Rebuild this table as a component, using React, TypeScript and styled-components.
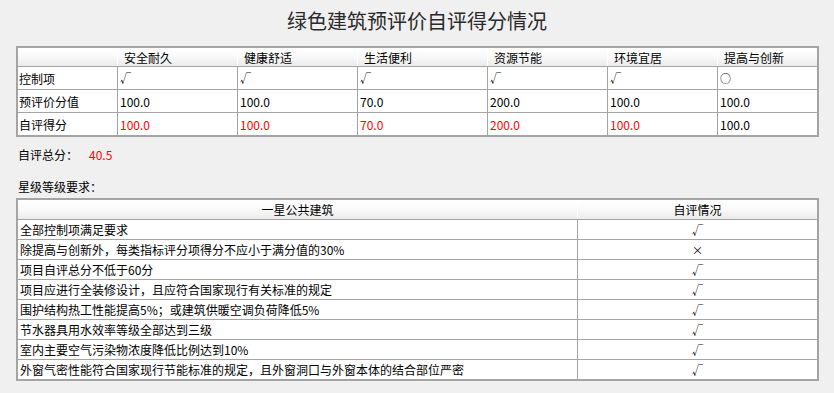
import styled, { createGlobalStyle } from 'styled-components';

const GlobalStyle = createGlobalStyle`
  html, body {
    margin: 0;
    padding: 0;
    background: #f0f0f0;
  }
  body {
    font-family: SimSun, "Noto Sans CJK SC", "Liberation Sans", sans-serif;
    font-size: 12px;
    color: #000;
  }
`;

const Page = styled.div`
  width: 834px;
  height: 393px;
  box-sizing: border-box;
  padding-left: 16px;
  overflow: hidden;
`;

const Title = styled.h1`
  margin: 0 0 6px -16px;
  height: 40px;
  display: flex;
  align-items: center;
  justify-content: center;
  font-size: 20px;
  font-weight: normal;
  color: #2a2a2a;
`;

const Frame = styled.div`
  width: 803px;
  box-sizing: border-box;
  border: 2px solid #a4a4a4;
  background: #a4a4a4;
`;

const Row = styled.div<{ $cols: string; $head?: boolean }>`
  display: grid;
  grid-template-columns: ${(p) => p.$cols};
  column-gap: 1px;
  background: ${(p) => (p.$head ? '#ffffff' : '#a4a4a4')};
  & + & {
    margin-top: 1px;
  }
`;

const HeadCell = styled.div<{ $h: number; $center?: boolean }>`
  height: ${(p) => p.$h}px;
  display: flex;
  align-items: center;
  justify-content: ${(p) => (p.$center ? 'center' : 'flex-start')};
  padding-left: ${(p) => (p.$center ? 0 : 6)}px;
  background: linear-gradient(#ffffff, #f8f8f8 55%, #ebebeb);
  white-space: nowrap;
`;

const Cell = styled.div<{ $h: number; $center?: boolean; $red?: boolean }>`
  height: ${(p) => p.$h}px;
  display: flex;
  align-items: center;
  justify-content: ${(p) => (p.$center ? 'center' : 'flex-start')};
  padding-left: ${(p) => (p.$center ? 0 : 2)}px;
  background: #ffffff;
  color: ${(p) => (p.$red ? '#ff0000' : '#000000')};
  white-space: nowrap;
  overflow: hidden;
`;

const Label = styled(Cell)`
  padding-left: 1px;
`;

const Mark = styled.span`
  font-size: 11px;
`;

const Summary = styled.div`
  margin-top: 10px;
  padding-left: 2px;
  height: 16px;
  line-height: 16px;
  display: flex;
`;

const Score = styled.span`
  margin-left: 11px;
  color: #ff0000;
`;

const Caption = styled.div`
  margin-top: 16px;
  padding-left: 2px;
  height: 16px;
  line-height: 16px;
  margin-bottom: 3px;
`;

const scoreCols = '99px 119px 119px 129px 119px 109px 99px';
const reqCols = '559px 239px';

const categories = ['安全耐久', '健康舒适', '生活便利', '资源节能', '环境宜居', '提高与创新'];
const controls = ['√', '√', '√', '√', '√', '○'];
const preset = ['100.0', '100.0', '70.0', '200.0', '100.0', '100.0'];
const selfScores = ['100.0', '100.0', '70.0', '200.0', '100.0', '100.0'];

const requirements = [
  { text: '全部控制项满足要求', ok: true },
  { text: '除提高与创新外，每类指标评分项得分不应小于满分值的30%', ok: false },
  { text: '项目自评总分不低于60分', ok: true },
  { text: '项目应进行全装修设计，且应符合国家现行有关标准的规定', ok: true },
  { text: '围护结构热工性能提高5%；或建筑供暖空调负荷降低5%', ok: true },
  { text: '节水器具用水效率等级全部达到三级', ok: true },
  { text: '室内主要空气污染物浓度降低比例达到10%', ok: true },
  { text: '外窗气密性能符合国家现行节能标准的规定，且外窗洞口与外窗本体的结合部位严密', ok: true },
];

export default function App() {
  return (
    <Page>
      <GlobalStyle />
      <Title>绿色建筑预评价自评得分情况</Title>

      <Frame>
        <Row $cols={scoreCols} $head>
          <HeadCell $h={18} />
          {categories.map((c) => (
            <HeadCell key={c} $h={18}>
              {c}
            </HeadCell>
          ))}
        </Row>
        <Row $cols={scoreCols}>
          <Label $h={22}>控制项</Label>
          {controls.map((m, i) => (
            <Cell key={i} $h={22}>
              <Mark>{m}</Mark>
            </Cell>
          ))}
        </Row>
        <Row $cols={scoreCols}>
          <Label $h={22}>预评价分值</Label>
          {preset.map((v, i) => (
            <Cell key={i} $h={22}>
              {v}
            </Cell>
          ))}
        </Row>
        <Row $cols={scoreCols}>
          <Label $h={22}>自评得分</Label>
          {selfScores.map((v, i) => (
            <Cell key={i} $h={22} $red={i < 5}>
              {v}
            </Cell>
          ))}
        </Row>
      </Frame>

      <Summary>
        自评总分：<Score>40.5</Score>
      </Summary>
      <Caption>星级等级要求：</Caption>

      <Frame>
        <Row $cols={reqCols} $head>
          <HeadCell $h={19} $center>
            一星公共建筑
          </HeadCell>
          <HeadCell $h={19} $center>
            自评情况
          </HeadCell>
        </Row>
        {requirements.map((r) => (
          <Row key={r.text} $cols={reqCols}>
            <Cell $h={19}>{r.text}</Cell>
            <Cell $h={19} $center>
              <Mark>{r.ok ? '√' : '×'}</Mark>
            </Cell>
          </Row>
        ))}
      </Frame>
    </Page>
  );
}
